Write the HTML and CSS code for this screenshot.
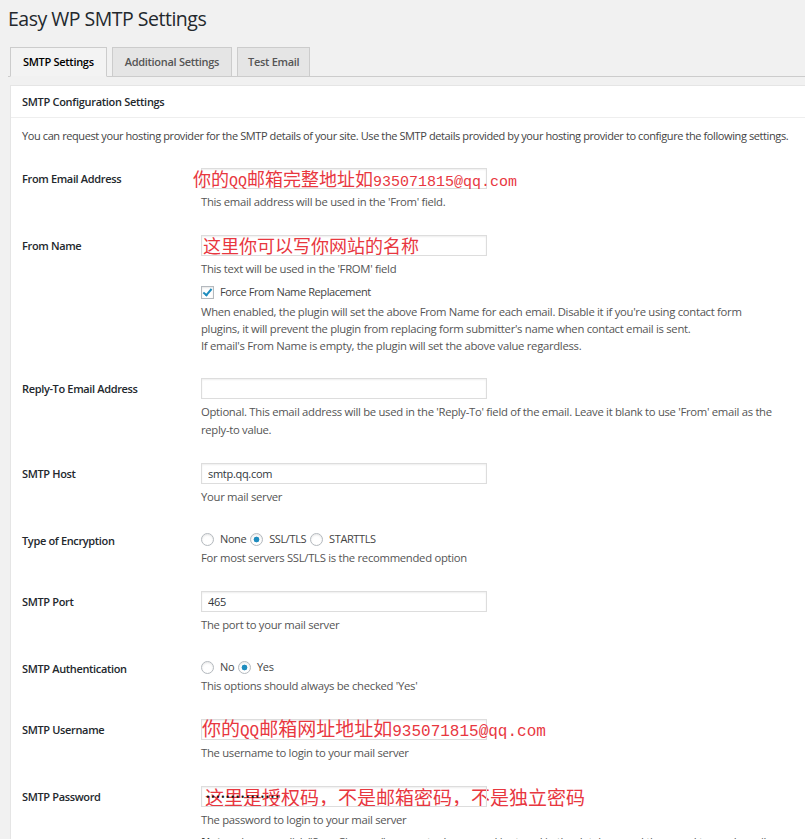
FILE: index.html
```html
<!DOCTYPE html>
<html lang="zh-CN">

<head>
    <meta charset="UTF-8">
    <meta name="viewport" content="width=device-width, initial-scale=1.0">
    <title>Easy WP SMTP Settings</title>
    <link rel="stylesheet" href="styles.css">
</head>

<body>
    <div class="wrap">
        <h1>Easy WP SMTP Settings</h1>

        <div class="tabs">
            <a class="tab active" href="#">SMTP Settings</a>
            <a class="tab" href="#">Additional Settings</a>
            <a class="tab" href="#">Test Email</a>
        </div>

        <div class="panel">
            <h3 class="panel-title">SMTP Configuration Settings</h3>
            <div class="panel-body">
                <p class="intro">You can request your hosting provider for the SMTP details of your site. Use the SMTP details provided by your hosting provider to configure the following settings.</p>

                <div class="form-row">
                    <label class="label">From Email Address</label>
                    <div class="field">
                        <div class="input-wrap">
                            <input class="text-input" type="text" value="">
                            <span class="mark mark-email">你的<span class="asc">QQ</span>邮箱完整地址如<span class="asc">935071815@qq.com</span></span>
                        </div>
                        <p class="desc">This email address will be used in the 'From' field.</p>
                    </div>
                </div>

                <div class="form-row">
                    <label class="label">From Name</label>
                    <div class="field">
                        <div class="input-wrap">
                            <input class="text-input" type="text" value="">
                            <span class="mark mark-name">这里你可以写你网站的名称</span>
                        </div>
                        <p class="desc">This text will be used in the 'FROM' field</p>
                        <label class="check-line">
                            <input type="checkbox" checked> Force From Name Replacement
                        </label>
                        <p class="desc desc-tight">When enabled, the plugin will set the above From Name for each email. Disable it if you're using contact form plugins, it will prevent the plugin from replacing form submitter's name when contact email is sent.<br>If email's From Name is empty, the plugin will set the above value regardless.</p>
                    </div>
                </div>

                <div class="form-row">
                    <label class="label">Reply-To Email Address</label>
                    <div class="field">
                        <input class="text-input" type="text" value="">
                        <p class="desc">Optional. This email address will be used in the 'Reply-To' field of the email. Leave it blank to use 'From' email as the reply-to value.</p>
                    </div>
                </div>

                <div class="form-row">
                    <label class="label">SMTP Host</label>
                    <div class="field">
                        <input class="text-input" type="text" value="smtp.qq.com">
                        <p class="desc">Your mail server</p>
                    </div>
                </div>

                <div class="form-row">
                    <label class="label label-radio">Type of Encryption</label>
                    <div class="field">
                        <div class="options">
                            <label><input type="radio" name="enc"> None</label>
                            <label><input type="radio" name="enc" checked> SSL/TLS</label>
                            <label><input type="radio" name="enc"> STARTTLS</label>
                        </div>
                        <p class="desc desc-radio">For most servers SSL/TLS is the recommended option</p>
                    </div>
                </div>

                <div class="form-row">
                    <label class="label">SMTP Port</label>
                    <div class="field">
                        <input class="text-input" type="text" value="465">
                        <p class="desc">The port to your mail server</p>
                    </div>
                </div>

                <div class="form-row">
                    <label class="label label-radio">SMTP Authentication</label>
                    <div class="field">
                        <div class="options">
                            <label><input type="radio" name="auth"> No</label>
                            <label><input type="radio" name="auth" checked> Yes</label>
                        </div>
                        <p class="desc desc-radio">This options should always be checked 'Yes'</p>
                    </div>
                </div>

                <div class="form-row">
                    <label class="label">SMTP Username</label>
                    <div class="field">
                        <div class="input-wrap">
                            <input class="text-input" type="text" value="">
                            <span class="mark mark-user">你的<span class="asc">QQ</span>邮箱网址地址如<span class="asc">935071815@qq.com</span></span>
                        </div>
                        <p class="desc">The username to login to your mail server</p>
                    </div>
                </div>

                <div class="form-row">
                    <label class="label">SMTP Password</label>
                    <div class="field">
                        <div class="input-wrap">
                            <span class="mark mark-pass">这里是授权码，不是邮箱密码，不是独立密码</span>
                            <input class="text-input pass-input" type="password" value="xxxxxxxxxxxxxxx">
                        </div>
                        <p class="desc">The password to login to your mail server</p>
                        <p class="desc"><strong>Note</strong>: when you click "Save Changes", your actual password is stored in the database and then used to send emails.</p>
                    </div>
                </div>
            </div>
        </div>
    </div>
</body>

</html>
```
FILE: styles.css
```css
body {
    margin: 0;
    background-color: #f1f1f1;
    font-family: "Open Sans", sans-serif;
    font-size: 11px;
    letter-spacing: -0.4px;
    color: #444;
}

.wrap {
    padding: 6px 0 0 8px;
}

h1 {
    margin: 0;
    font-size: 19.5px;
    font-weight: 400;
    letter-spacing: -0.5px;
    line-height: 26px;
    color: #23282d;
}

.tabs {
    display: flex;
    margin-top: 15px;
    padding-left: 2px;
    border-bottom: 1px solid #ccc;
}

.tab {
    display: block;
    height: 28px;
    line-height: 28px;
    padding: 0 12px;
    margin-right: 5px;
    margin-bottom: -1px;
    border: 1px solid #ccc;
    background: #e5e5e5;
    color: #555;
    font-weight: 600;
    letter-spacing: -0.3px;
    text-decoration: none;
}

.tab:last-child {
    padding: 0 10px;
}

.tab.active {
    background: #f3f3f3;
    border-bottom-color: #f1f1f1;
    color: #000;
}

.panel {
    margin: 8px 0 0 2px;
    background: #fff;
    border: 1px solid #e5e5e5;
    border-right: 0;
}

.panel-title {
    margin: 0;
    padding: 0 11px;
    line-height: 31px;
    font-size: 11px;
    font-weight: 600;
    letter-spacing: -0.3px;
    color: #23282d;
    border-bottom: 1px solid #eee;
}

.panel-body {
    padding: 9px 28px 20px 11px;
}

.intro {
    margin: 0 0 11px;
    line-height: 18px;
    white-space: nowrap;
}

.form-row {
    display: flex;
    padding: 12px 0;
}

.label {
    flex: none;
    width: 179px;
    line-height: 21px;
    font-weight: 600;
    letter-spacing: -0.35px;
    color: #23282d;
}

.label-radio {
    line-height: 22px;
}

.field {
    flex: 1;
    min-width: 0;
}

.input-wrap {
    position: relative;
    width: 286px;
}

.text-input {
    display: block;
    box-sizing: border-box;
    width: 286px;
    height: 21px;
    margin: 0;
    padding: 0 6px;
    border: 1px solid #ddd;
    box-shadow: inset 0 1px 2px rgba(0, 0, 0, 0.07);
    background: #fff;
    font-family: inherit;
    font-size: 11px;
    letter-spacing: -0.3px;
    color: #32373c;
    outline: none;
}

/* the dots of the saved password show through the note */
.pass-input {
    position: relative;
    z-index: 1;
    background: transparent;
    font-size: 10px;
    letter-spacing: 1.2px;
    color: #111;
    padding-left: 4px;
}

.desc {
    margin: 4px 0 0;
    line-height: 18px;
    font-size: 11.3px;
    letter-spacing: -0.3px;
    color: #555;
}

.desc-tight {
    margin-top: 2px;
    line-height: 17px;
}

.desc-radio {
    margin-top: 1px;
}

.desc strong {
    font-weight: 700;
    color: #444;
}

.check-line {
    display: flex;
    align-items: center;
    margin-top: 5px;
    line-height: 18px;
    color: #444;
}

input[type="checkbox"],
input[type="radio"] {
    -webkit-appearance: none;
    appearance: none;
    box-sizing: border-box;
    flex: none;
    width: 13px;
    height: 13px;
    margin: 0 6px 0 0;
    border: 1px solid #b4b9be;
    background: #fff;
    box-shadow: inset 0 1px 2px rgba(0, 0, 0, 0.1);
    position: relative;
}

input[type="radio"] {
    border-radius: 50%;
}

input[type="radio"]:checked {
    background: radial-gradient(circle, #1e8cbe 0 2.6px, #fff 3.2px);
}

input[type="checkbox"]:checked::before {
    content: "";
    position: absolute;
    left: 3px;
    top: 0;
    width: 3px;
    height: 7px;
    border-right: 2px solid #1e8cbe;
    border-bottom: 2px solid #1e8cbe;
    transform: rotate(40deg);
}

.options {
    display: flex;
    height: 18px;
    line-height: 18px;
    color: #444;
}

.options label {
    display: flex;
    align-items: center;
    margin-right: 4px;
}

.mark {
    position: absolute;
    z-index: 0;
    white-space: nowrap;
    color: #e8373f;
    font-family: "Noto Sans CJK SC", sans-serif;
    font-size: 19px;
    line-height: 22px;
    font-weight: 400;
    letter-spacing: 0;
    pointer-events: none;
}

.mark .asc {
    font-family: "Liberation Mono", "Noto Sans CJK SC", monospace;
    font-size: 16px;
}

.mark-email {
    left: -8px;
    top: -1px;
    font-size: 18px;
}

.mark-email .asc {
    font-size: 15px;
}

.mark-name {
    left: 2px;
    top: -1px;
    font-size: 18px;
}

.mark-user {
    left: 1px;
    top: -2px;
}

.mark-pass {
    left: 4px;
    top: 0;
}
```
